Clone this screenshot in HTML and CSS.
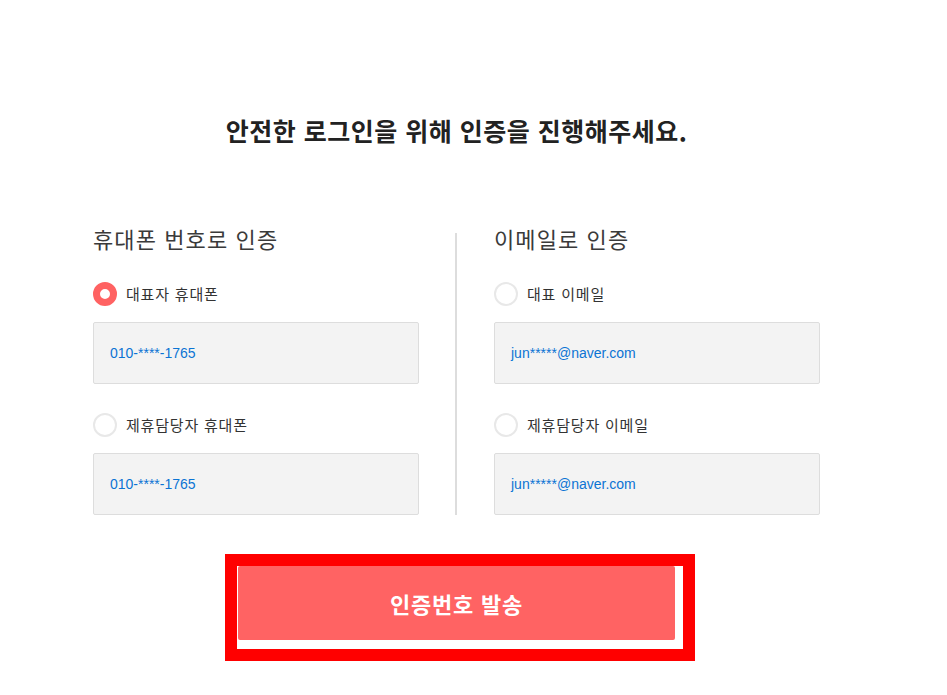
FILE: index.html
```html
<!DOCTYPE html>
<html lang="ko">
<head>
<meta charset="utf-8">
<title>인증</title>
<link rel="stylesheet" href="styles.css">
</head>
<body>
<main class="page">
  <h1 class="title">안전한 로그인을 위해 인증을 진행해주세요.</h1>
  <div class="columns">
    <section class="col">
      <h2 class="col-heading">휴대폰 번호로 인증</h2>
      <label class="option">
        <span class="radio radio-on"></span>
        <span class="option-label">대표자 휴대폰</span>
      </label>
      <div class="field">010-****-1765</div>
      <label class="option option-second">
        <span class="radio"></span>
        <span class="option-label">제휴담당자 휴대폰</span>
      </label>
      <div class="field">010-****-1765</div>
    </section>
    <div class="divider"></div>
    <section class="col">
      <h2 class="col-heading">이메일로 인증</h2>
      <label class="option">
        <span class="radio"></span>
        <span class="option-label">대표 이메일</span>
      </label>
      <div class="field">jun*****@naver.com</div>
      <label class="option option-second">
        <span class="radio"></span>
        <span class="option-label">제휴담당자 이메일</span>
      </label>
      <div class="field">jun*****@naver.com</div>
    </section>
  </div>
  <div class="highlight">
    <button class="send-btn" type="button">인증번호 발송</button>
  </div>
</main>
</body>
</html>
```
FILE: styles.css
```css
* {
  box-sizing: border-box;
}

html, body {
  margin: 0;
  padding: 0;
  background: #ffffff;
}

body {
  font-family: "Noto Sans CJK KR", "Noto Sans", sans-serif;
  color: #333333;
}

.page {
  width: 727px;
  margin-left: 93px;
  padding-top: 112px;
}

.title {
  margin: 0;
  text-align: center;
  font-size: 25px;
  line-height: 36px;
  font-weight: 700;
  color: #222222;
  letter-spacing: 0.5px;
}

.columns {
  display: flex;
  margin-top: 75px;
}

.col {
  width: 326px;
  flex: none;
}

.divider {
  width: 2px;
  flex: none;
  background: #dddddd;
  margin: 10px 37px 0 36px;
}

.col-heading {
  margin: 0;
  font-size: 22px;
  line-height: 30px;
  font-weight: 400;
  color: #3a3a3a;
  letter-spacing: 1.1px;
}

.option {
  display: flex;
  align-items: center;
  height: 24px;
  margin-top: 29px;
}

.option-second {
  margin-top: 29px;
}

.radio {
  width: 24px;
  height: 24px;
  border-radius: 50%;
  border: 2px solid #e8e8e8;
  background: #ffffff;
  flex: none;
}

.radio-on {
  border: 7px solid #ff6262;
}

.option-label {
  margin-left: 9px;
  font-size: 15px;
  line-height: 24px;
  color: #333333;
  letter-spacing: 0.8px;
}

.field {
  margin-top: 16px;
  height: 62px;
  display: flex;
  align-items: center;
  padding-left: 16px;
  background: #f3f3f3;
  border: 1px solid #dddddd;
  border-radius: 2px;
  font-family: "Liberation Sans", Arial, sans-serif;
  font-size: 14px;
  color: #0b74d4;
}

.highlight {
  width: 470px;
  margin: 39px 0 0 132px;
  border: 12px solid #ff0000;
  padding: 0 8px 9px 1px;
}

.send-btn {
  display: block;
  width: 437px;
  height: 74px;
  border: none;
  border-radius: 2px;
  background: #ff6363;
  color: #ffffff;
  font-family: "Noto Sans CJK KR", "Noto Sans", sans-serif;
  font-size: 22px;
  font-weight: 700;
  letter-spacing: 0.8px;
  padding: 0;
}
```
